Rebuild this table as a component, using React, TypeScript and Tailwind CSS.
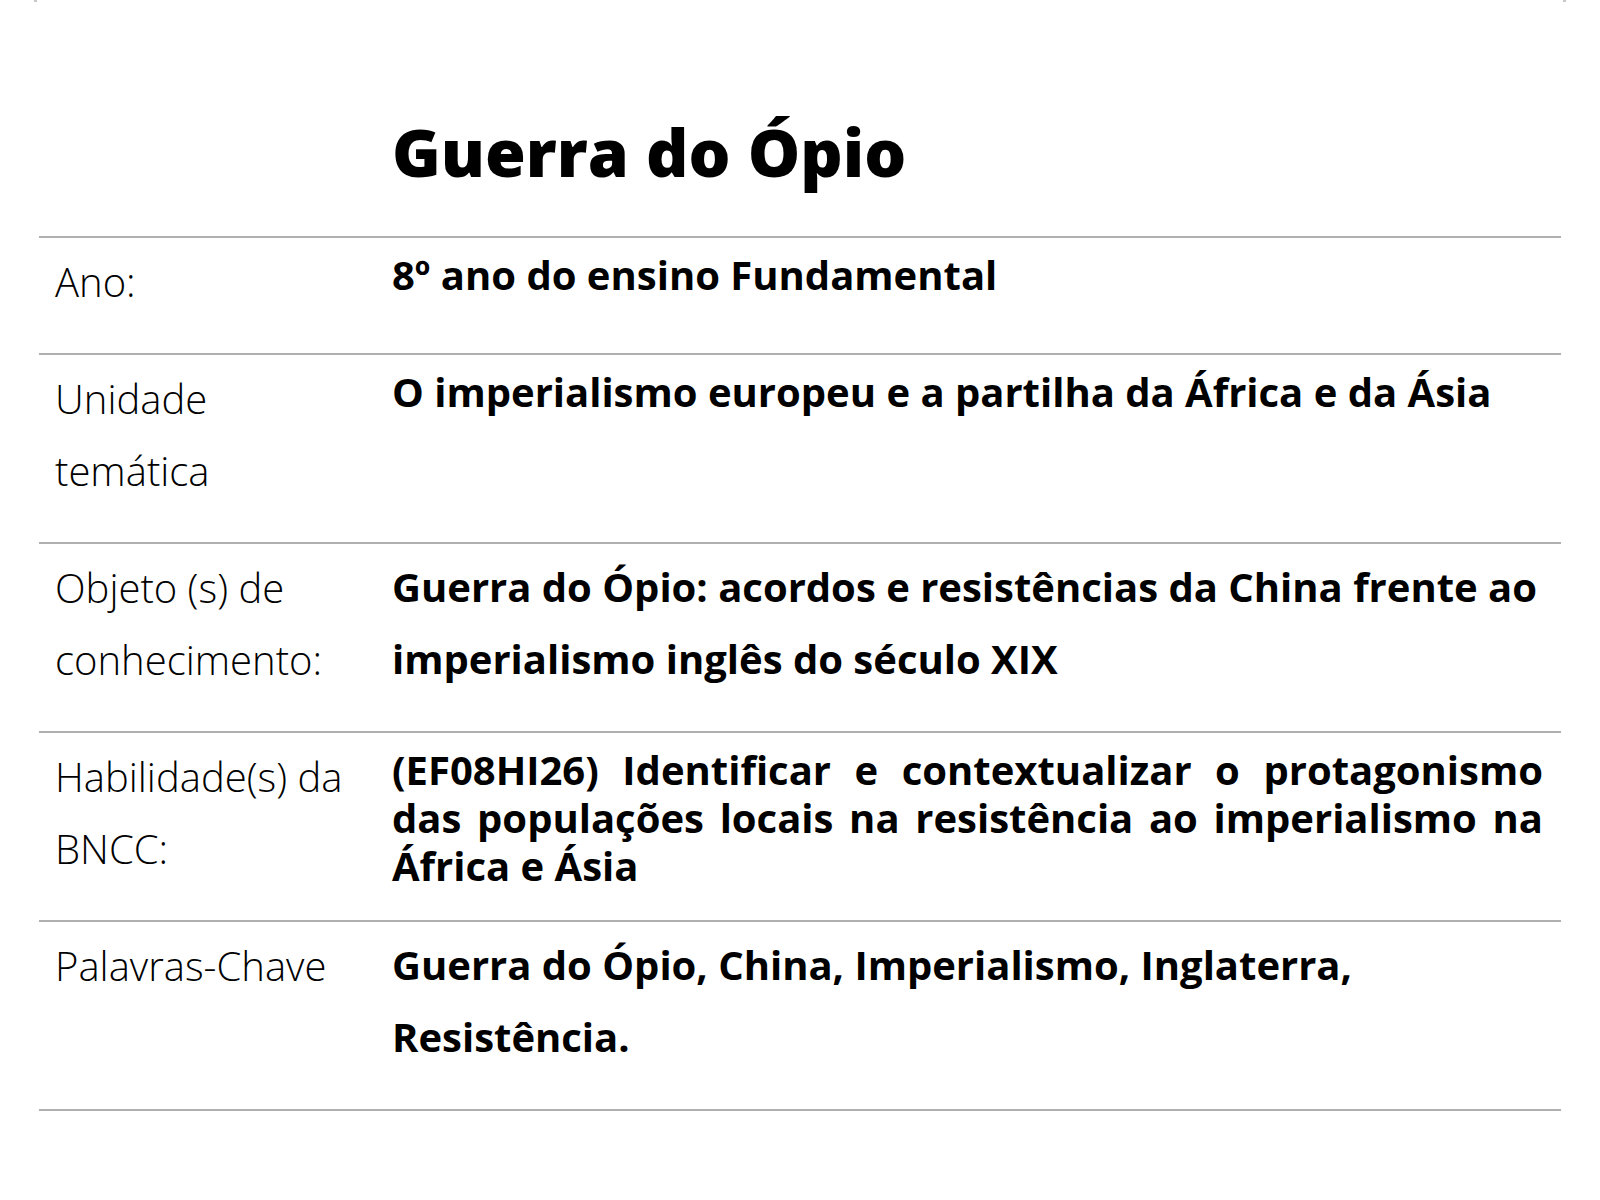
import React from 'react';

interface Row {
  label: string[];
  value: React.ReactNode;
  valueClass: string;
}

const rows: Row[] = [
  {
    label: ['Ano:'],
    value: '8º ano do ensino Fundamental',
    valueClass: 'pt-[1px] pb-[35px] leading-[72px]',
  },
  {
    label: ['Unidade', 'temática'],
    value: 'O imperialismo europeu e a partilha da África e da Ásia',
    valueClass: 'pt-[1px] pb-[35px] leading-[72px]',
  },
  {
    label: ['Objeto (s) de', 'conhecimento:'],
    value: 'Guerra do Ópio: acordos e resistências da China frente ao imperialismo inglês do século XIX',
    valueClass: 'pt-[7px] pb-[35px] leading-[72px]',
  },
  {
    label: ['Habilidade(s) da', 'BNCC:'],
    value:
      '(EF08HI26) Identificar e contextualizar o protagonismo das populações locais na resistência ao imperialismo na África e Ásia',
    valueClass: 'pt-[13px] pb-[20px] leading-[48px] text-justify',
  },
  {
    label: ['Palavras-Chave'],
    value: 'Guerra do Ópio, China, Imperialismo, Inglaterra, Resistência.',
    valueClass: 'pt-[7px] pb-[36px] leading-[72px]',
  },
];

export default function App() {
  return (
    <div className="min-h-screen bg-white text-black font-['Open_Sans',sans-serif]">
      {/* corner marks */}
      <div className="flex justify-between px-[34px] h-[3px]">
        <div className="w-[3px] h-[2px] bg-[#c8c8c8]" />
        <div className="w-[3px] h-[2px] bg-[#c8c8c8]" />
      </div>

      <div className="px-[39px]">
        {/* Title */}
        <div className="pl-[353px] pt-[116px] pb-[53px]">
          <h1 className="text-[66px] font-extrabold leading-[64px]">Guerra do Ópio</h1>
        </div>

        {/* Table */}
        <div className="border-b-2 border-[#b0b0b0]">
          {rows.map((row, i) => (
            <div key={i} className="flex border-t-2 border-[#b0b0b0]">
              <div className="w-[353px] shrink-0 pl-[16px] pt-[8px] pb-[35px] text-[40px] font-light leading-[72px]">
                {row.label.map((l, j) => (
                  <div key={j}>{l}</div>
                ))}
              </div>
              <div className={`flex-1 pr-[18px] text-[40px] font-bold ${row.valueClass}`}>
                {row.value}
              </div>
            </div>
          ))}
        </div>
      </div>
    </div>
  );
}
